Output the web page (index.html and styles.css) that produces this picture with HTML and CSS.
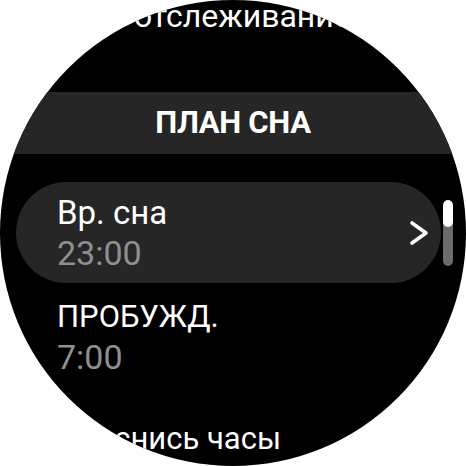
FILE: index.html
```
<!DOCTYPE html>
<html lang="ru">
<head>
<meta charset="utf-8">
<link rel="stylesheet" href="styles.css">
</head>
<body>
<div class="screen">
  <div class="list">
    <div class="item item-top"><span class="title small">Авто отслеживание</span></div>
    <div class="header">ПЛАН СНА</div>
    <div class="item pill">
      <div class="texts">
        <div class="title">Вр. сна</div>
        <div class="value">23:00</div>
      </div>
      <svg class="chev" width="20" height="26" viewBox="0 0 20 26"><path d="M3 3 L17 13 L3 23" fill="none" stroke="#fff" stroke-width="3.6" stroke-linecap="round" stroke-linejoin="round"/></svg>
    </div>
    <div class="item">
      <div class="texts">
        <div class="title mid">ПРОБУЖД.</div>
        <div class="value">7:00</div>
      </div>
    </div>
    <div class="item item-single"><span class="title bottom">Проснись часы</span></div>
  </div>
  <div class="scrollbar"><div class="thumb"></div></div>
</div>
</body>
</html>
```
FILE: styles.css
```
html, body {
  margin: 0;
  padding: 0;
  background: #fff;
}
body {
  width: 466px;
  height: 466px;
  overflow: hidden;
  font-family: Roboto, "Noto Sans", sans-serif;
}
.screen {
  position: relative;
  width: 466px;
  height: 466px;
  border-radius: 50%;
  overflow: hidden;
  background: #000;
}
.list {
  display: flex;
  flex-direction: column;
  margin-top: -35px;
}
.item {
  box-sizing: border-box;
  height: 101px;
  margin: 0 25px 2px 16px;
  padding: 12px 0 0 41px;
  display: flex;
  align-items: flex-start;
  white-space: nowrap;
}
.item-top {
  margin-bottom: 26px;
  padding-top: 0;
  align-items: center;
  padding-left: 38px;
}
.item-single {
  padding-top: 0;
  align-items: center;
}
.header {
  height: 62px;
  margin-bottom: 28px;
  background: #262626;
  color: #fff;
  font-weight: 700;
  font-size: 31px;
  line-height: 62px;
  text-align: center;
  letter-spacing: -0.3px;
}
.pill {
  background: #262626;
  border-radius: 51px;
  align-items: center;
  padding-top: 0;
  padding-right: 12px;
  justify-content: space-between;
}
.texts {
  display: flex;
  flex-direction: column;
}
.title {
  color: #fff;
  font-size: 33px;
  line-height: 40px;
}
.title.small {
  font-size: 32px;
}
.title.mid {
  font-size: 31px;
}
.title.bottom {
  font-size: 31px;
}
.value {
  color: #8f8f8f;
  font-size: 34px;
  line-height: 40px;
}
.chev {
  display: block;
  margin-top: 1px;
}
.scrollbar {
  position: absolute;
  left: 443px;
  top: 200px;
  width: 10px;
  height: 66px;
  border-radius: 5px;
  background: #6b6b6b;
  overflow: hidden;
}
.thumb {
  height: 27px;
  border-radius: 5px;
  background: #fff;
}
```
